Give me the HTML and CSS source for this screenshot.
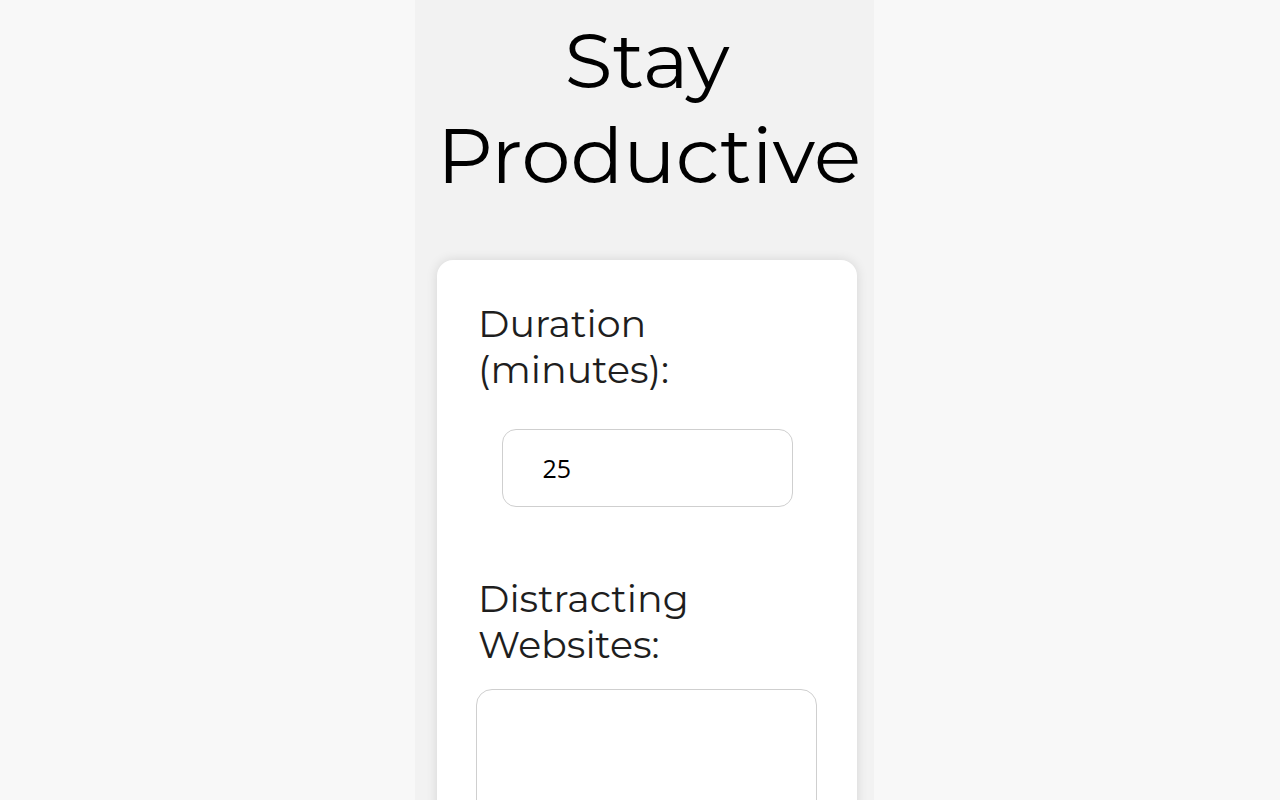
FILE: index.html
```html
<!DOCTYPE html>
<html lang="en">
<head>
<meta charset="utf-8">
<title>Stay Productive</title>
<link rel="stylesheet" href="styles.css">
</head>
<body>
<main class="column">
  <h1 class="title">Stay Productive</h1>
  <section class="card">
    <label class="field-label" for="duration">Duration (minutes):</label>
    <input class="duration-input" id="duration" type="text" value="25">
    <label class="field-label field-label--sites" for="sites">Distracting Websites:</label>
    <textarea class="sites-input" id="sites"></textarea>
  </section>
</main>
</body>
</html>
```

FILE: styles.css
```css
html, body {
  margin: 0;
  padding: 0;
}

body {
  background: #f8f8f8;
  font-family: "Montserrat", "DejaVu Sans", sans-serif;
  color: #000;
  overflow: hidden;
}

.column {
  box-sizing: border-box;
  width: 459px;
  min-height: 100vh;
  margin-left: calc(50% - 225px);
  padding: 13px 17px 0 22px;
  background: #f2f2f2;
}

.title {
  margin: 0;
  font-size: 78px;
  line-height: 95px;
  font-weight: normal;
  text-align: center;
  color: #000;
}

.card {
  margin-top: 57px;
  padding: 41px 41px 40px 41px;
  background: #fff;
  border-radius: 16px;
  box-shadow: 0 0 12px rgba(0, 0, 0, 0.12);
  height: 600px;
}

.field-label {
  display: block;
  font-size: 38px;
  line-height: 46px;
  color: #1e1e1e;
}

.field-label--sites {
  margin-top: 69px;
}

.duration-input {
  display: block;
  box-sizing: border-box;
  width: 291px;
  height: 78px;
  margin: 36px auto 0;
  padding: 0 0 0 40px;
  border: 1px solid #cfcfcf;
  border-radius: 14px;
  font-family: "Open Sans", Roboto, sans-serif;
  font-size: 25px;
  color: #000;
  background: #fff;
  outline: none;
}

.sites-input {
  display: block;
  box-sizing: border-box;
  width: 341px;
  height: 220px;
  margin: 21px 0 0 -2px;
  border: 1px solid #cfcfcf;
  border-radius: 16px;
  resize: none;
  background: #fff;
  outline: none;
}
```
